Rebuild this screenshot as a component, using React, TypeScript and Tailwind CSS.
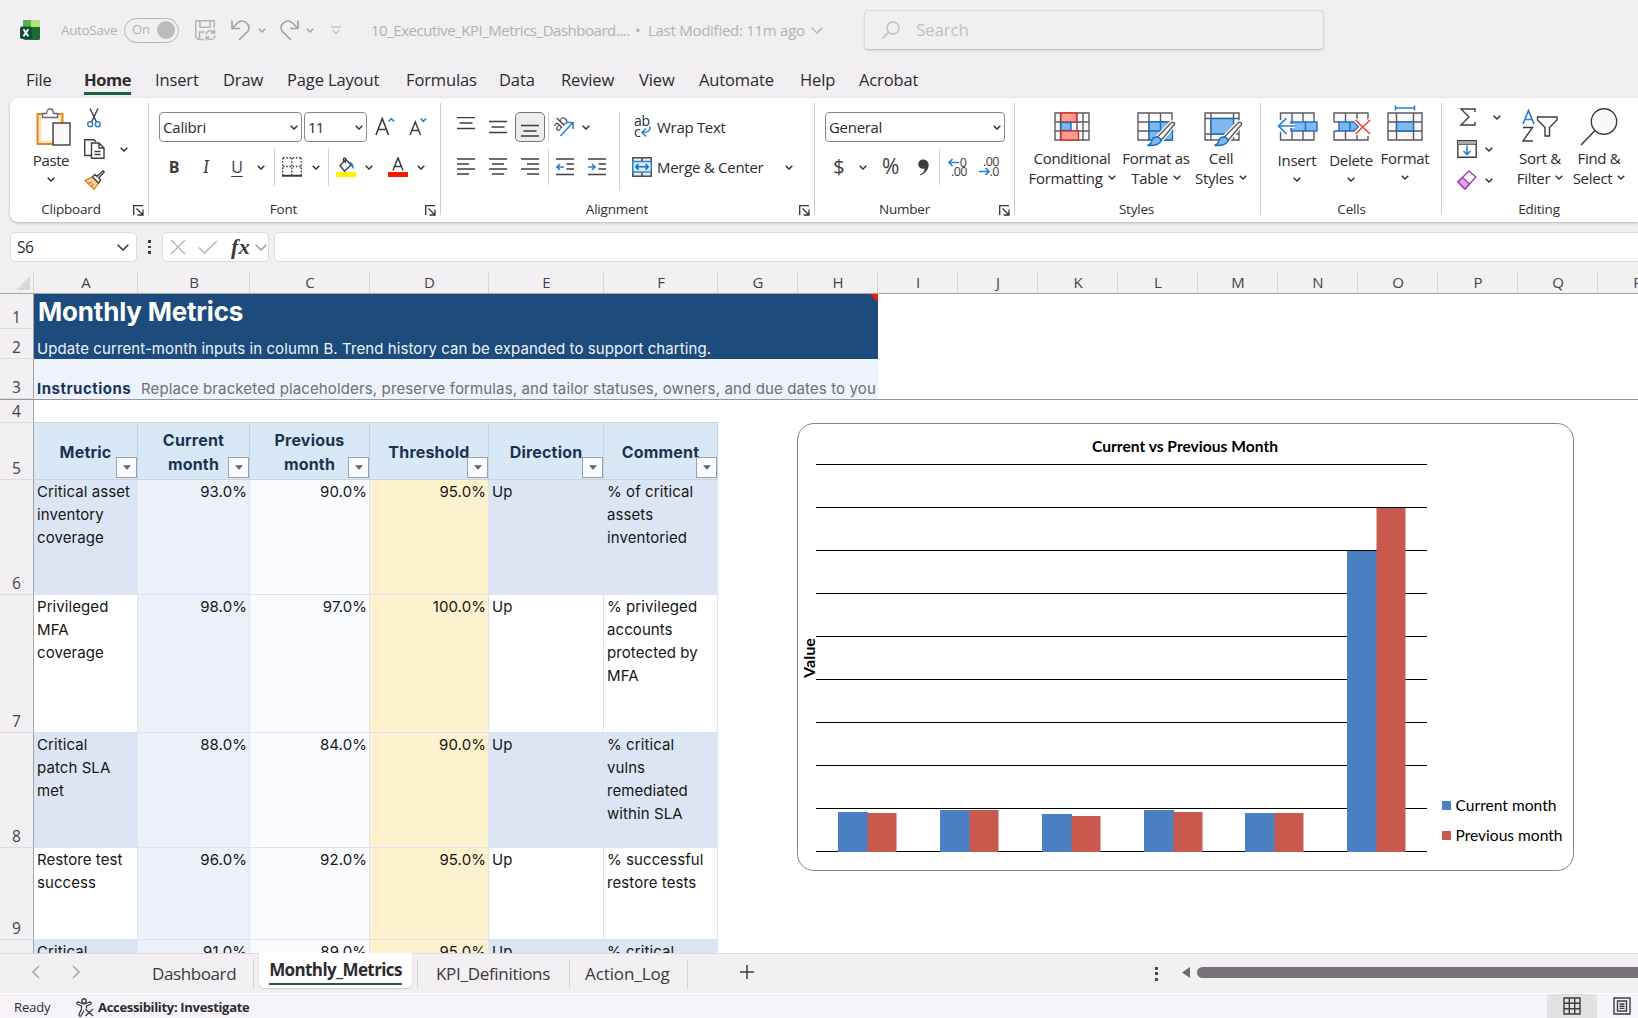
import type { ReactNode } from "react";
import clsx from "clsx";

const columns = [
  { name: "A", width: 104 },
  { name: "B", width: 112 },
  { name: "C", width: 120 },
  { name: "D", width: 119 },
  { name: "E", width: 115 },
  { name: "F", width: 114 },
  ...["G", "H", "I", "J", "K", "L", "M", "N", "O", "P", "Q", "R"].map((name) => ({ name, width: 80 })),
];

const headers = ["Metric", "Current month", "Previous month", "Threshold", "Direction", "Comment"];

const metrics = [
  { row: 6, height: 115, metric: "Critical asset\ninventory\ncoverage", current: "93.0%", previous: "90.0%", threshold: "95.0%", direction: "Up", comment: "% of critical\nassets\ninventoried" },
  { row: 7, height: 138, metric: "Privileged\nMFA\ncoverage", current: "98.0%", previous: "97.0%", threshold: "100.0%", direction: "Up", comment: "% privileged\naccounts\nprotected by\nMFA" },
  { row: 8, height: 115, metric: "Critical\npatch SLA\nmet", current: "88.0%", previous: "84.0%", threshold: "90.0%", direction: "Up", comment: "% critical\nvulns\nremediated\nwithin SLA" },
  { row: 9, height: 92, metric: "Restore test\nsuccess", current: "96.0%", previous: "92.0%", threshold: "95.0%", direction: "Up", comment: "% successful\nrestore tests" },
  { row: 10, height: 92, metric: "Critical", current: "91.0%", previous: "89.0%", threshold: "95.0%", direction: "Up", comment: "% critical" },
];

const menu = [
  { label: "File", width: 58 },
  { label: "Home", width: 71 },
  { label: "Insert", width: 68 },
  { label: "Draw", width: 64 },
  { label: "Page Layout", width: 119 },
  { label: "Formulas", width: 93 },
  { label: "Data", width: 62 },
  { label: "Review", width: 78 },
  { label: "View", width: 60 },
  { label: "Automate", width: 101 },
  { label: "Help", width: 59 },
  { label: "Acrobat", width: 80 },
];

type IconProps = { w: number; h: number; children: ReactNode; className?: string; stroke?: string };

function Icon({ w, h, children, className, stroke = "#3f3c40" }: IconProps) {
  return (
    <svg width={w} height={h} viewBox={`0 0 ${w} ${h}`} fill="none" stroke={stroke} strokeWidth="1.4" className={clsx("shrink-0", className)}>
      {children}
    </svg>
  );
}

function Chevron({ className, big, stroke = "#2b2b2b" }: { className?: string; big?: boolean; stroke?: string }) {
  return big ? (
    <Icon w={12} h={7} stroke={stroke} className={className}>
      <path d="M.7.8 6 6 11.300.8" />
    </Icon>
  ) : (
    <Icon w={8} h={5} stroke={stroke} className={className}>
      <path d="M.7.7 4 4 7.300.7" />
    </Icon>
  );
}

function Launcher() {
  return (
    <Icon w={11} h={11} stroke="#333">
      <path d="M10 .7H.7V10M3.500 3.500 9.500 9.500M10 4.500V10H4.500" strokeWidth="1.3" />
    </Icon>
  );
}

function Divider({ className }: { className?: string }) {
  return <div className={clsx("w-px shrink-0 bg-[#d3d1d4]", className)} />;
}

type GroupProps = { label: string; width: string; labelPad?: string; launcher?: boolean; children: ReactNode };

function Group({ label, width, labelPad, launcher, children }: GroupProps) {
  return (
    <section className={clsx("relative flex shrink-0 flex-col pt-[5px]", width)}>
      <div className="flex h-[96px]">{children}</div>
      <div className={clsx("text-center text-[13.5px] leading-5 tracking-[-0.2px] text-[#2f2f2f]", labelPad)}>{label}</div>
      {launcher && (
        <div className="absolute right-[5px] bottom-[6px]">
          <Launcher />
        </div>
      )}
      <div className="absolute top-[5px] right-0 h-[112px] w-px bg-[#cfcdd0]" />
    </section>
  );
}

function Lines({ rows, className }: { rows: [number, number, number][]; className?: string }) {
  return (
    <Icon w={18} h={20} className={className}>
      {rows.map(([x1, x2, y]) => (
        <path key={y} d={`M${x1} ${y}H${x2}`} strokeWidth="1.3" />
      ))}
    </Icon>
  );
}

function TitleBar() {
  return (
    <header className="flex h-[60px] items-center text-[#b3b1b4]">
      <Icon w={20} h={20} stroke="none" className="ml-5">
        <rect x="3" y="0" width="17" height="20" rx="2" fill="#1d7a35" />
        <path d="M5 0h7v7H3V2a2 2 0 0 1 2-2z" fill="#53b847" />
        <path d="M11 0h7a2 2 0 0 1 2 2v5h-9z" fill="#b6e27c" />
        <path d="M11 7h9v11a2 2 0 0 1-2 2h-7z" fill="#1e6b2d" />
        <rect x="0" y="6.500" width="12" height="12.500" rx="2" fill="#0f4f33" />
        <path d="M3.500 9.300 8.300 16.200M8.300 9.300 3.500 16.200" stroke="#fff" strokeWidth="1.900" />
      </Icon>
      <span className="ml-[21px] w-[63px] text-[13.5px] tracking-[-0.35px]">AutoSave</span>
      <div className="flex h-[25px] w-[55px] items-center justify-between rounded-full border border-[#b5b3b6] pr-[3px] pl-[7px]">
        <span className="text-[13px]">On</span>
        <span className="size-[18px] rounded-full bg-[#bcbabd]" />
      </div>
      <Icon w={21} h={21} stroke="#b3b1b4" className="ml-[16px]">
        <path d="M9 19.500H3.500L.8 17V.8h18.400V8M5 .8v6.400h10V.8M4.500 19v-7h5" />
        <path d="M11 14.500a4.500 4.500 0 0 1 8.300-1.500M19.500 9.500V13h-3.500M20 15.500a4.500 4.500 0 0 1-8.300 1.800M11.200 20.500V17h3.500" />
      </Icon>
      <Icon w={19} h={21} stroke="#a3a1a4" className="ml-[15px]">
        <path d="M1 .5V8.500H9M1 8.500 6.500 3C12-2 20.500 4.500 17 11L8 20" strokeWidth="1.600" />
      </Icon>
      <Chevron className="ml-[8px]" stroke="#a3a1a4" />
      <Icon w={19} h={21} stroke="#a3a1a4" className="ml-[14px]">
        <path d="M18 .5V8.500H10M18 8.500 12.500 3C7-2-1.500 4.500 2 11L11 20" strokeWidth="1.600" />
      </Icon>
      <Chevron className="ml-[7px]" stroke="#a3a1a4" />
      <Icon w={10} h={9} stroke="#c4c2c5" className="ml-[17px]">
        <path d="M0 1H10M1.500 4 5 7.500 8.500 4" />
      </Icon>
      <span className="ml-[30px] w-[262px] text-[15px] tracking-[-0.47px] whitespace-nowrap">10_Executive_KPI_Metrics_Dashboard....</span>
      <span className="mr-[3px] ml-[2px] w-[10px] text-[15px]">•</span>
      <span className="w-[162px] text-[15px] tracking-[-0.27px] whitespace-nowrap">Last Modified: 11m ago</span>
      <Chevron big stroke="#b3b1b4" className="ml-px" />
      <div className="ml-[41px] flex h-[40px] w-[460px] items-center rounded-[4px] border border-[#d9d7da] border-b-[#c5c3c6] pb-px pl-[17px] shadow-[0_1px_2px_rgba(0,0,0,0.1)]">
        <Icon w={18} h={18} stroke="#c0bec1">
          <circle cx="11" cy="7" r="6" />
          <path d="M6.700 11.300.5 17.500" />
        </Icon>
        <span className="ml-[16px] text-[17px] tracking-[-0.2px] text-[#c3c1c4]">Search</span>
      </div>
    </header>
  );
}

function Menu() {
  return (
    <nav className="flex h-[38px] pl-[26px] text-[16.5px] tracking-[-0.13px] text-[#2d2b2e]">
      {menu.map((item) => (
        <div key={item.label} style={{ width: item.width }} className="pt-[8px] leading-6 whitespace-nowrap">
          {item.label === "Home" ? (
            <span className="inline-block h-[27px] border-b-[3px] border-[#1a6045] font-bold tracking-[-0.4px]">{item.label}</span>
          ) : (
            item.label
          )}
        </div>
      ))}
    </nav>
  );
}

function ClipboardGroup() {
  return (
    <Group label="Clipboard" width="w-[139px]" labelPad="pr-[17px]" launcher>
      <div className="ml-[16px] flex w-[50px] flex-col items-center">
        <Icon w={35} h={38} className="mt-[5px] ml-[5px]">
          <rect x="1.500" y="6" width="25" height="30" fill="#fbe0b2" stroke="#e08a1e" strokeWidth="2" />
          <rect x="5" y="9" width="18" height="24" fill="#fff" stroke="none" />
          <path d="M6.500 9.500V5.500h4c0-6 7-6 7 0h4v4z" fill="#fff" stroke="#6b696c" />
          <rect x="17" y="15" width="17" height="22" fill="#faf8fb" />
        </Icon>
        <span className="mt-[2px] text-[15px] leading-6 tracking-[-0.4px] text-[#2d2b2e]">Paste</span>
        <Chevron className="mt-[5px]" />
      </div>
      <div className="ml-[8px] flex w-[20px] flex-col items-center">
        <Icon w={14} h={20} className="mt-[5px]">
          <path d="M3 .5 9.500 14M11 .5 4.500 14" />
          <circle cx="3.200" cy="16.300" r="2.500" stroke="#2782cf" />
          <circle cx="10.800" cy="16.300" r="2.500" stroke="#2782cf" />
        </Icon>
        <Icon w={21} h={20} className="mt-[11px]">
          <path d="M7 16.500H.7V.7H10l2 2" />
          <path d="M7.500 4H15l5 5v10.300H7.500zM15 4v5h5M10.500 12.500h6M10.500 15.500h6" fill="#fff" />
        </Icon>
        <Icon w={21} h={20} className="mt-[11px]">
          <path d="M1 10.500 8.500 7l6 6L10 19.300z" fill="#fbd9a4" stroke="#df8424" />
          <path d="M4 14 8 12M7 17l2.500-3" stroke="#df8424" />
          <path d="M8.500 7 11 4.500l2 2L19 .8l1.200 1.300-5.500 6 2 2-2.200 2.900z" fill="#fff" />
        </Icon>
      </div>
      <Chevron className="mt-[44px] ml-[16px]" />
    </Group>
  );
}

function FontGroup() {
  return (
    <Group label="Font" width="w-[292px]" labelPad="pr-[23px]" launcher>
      <div className="flex flex-col pl-[10px]">
        <div className="mt-[9px] flex h-[30px] items-center">
          <div className="flex h-[30px] w-[143px] items-center justify-between rounded-[4px] border border-[#8b898c] pt-px pr-[3px] pl-[3px] text-[15px] tracking-[-0.2px]">
            Calibri
            <Chevron />
          </div>
          <div className="ml-[2px] flex h-[30px] w-[63px] items-center justify-between rounded-[4px] border border-[#8b898c] pt-px pr-[3px] pl-[3px] text-[15px] tracking-[-0.8px]">
            11
            <Chevron />
          </div>
          <Icon w={20} h={19} className="-mt-[2px] ml-[8px]">
            <path d="M1 18 7.300 1.500 13.500 18M3.200 12.500h8.300" strokeWidth="1.600" />
            <path d="M13.500 4.500 16.300 1.700 19 4.500" stroke="#2782cf" strokeWidth="1.600" />
          </Icon>
          <Icon w={18} h={19} className="-mt-[2px] ml-[14px]">
            <path d="M1 18 6.300 5 11.500 18M2.900 13.500h7" strokeWidth="1.500" />
            <path d="M11.500 1.500 14.300 4.300 17 1.500" stroke="#2782cf" strokeWidth="1.600" />
          </Icon>
        </div>
        <div className="mt-[11px] flex h-[28px] items-center text-[#3f3c40]">
          <span className="w-[30px] text-center text-[16px] font-bold">B</span>
          <span className="w-[34px] text-center font-serif text-[18px] italic">I</span>
          <span className="w-[28px] text-center text-[16px] underline underline-offset-[3px]">U</span>
          <Chevron className="ml-[6px]" />
          <Divider className="ml-[9px] h-[38px]" />
          <Icon w={20} h={20} className="ml-[7px]">
            <path d="M1 .7H19M1 9.500H19M.7 1V18M9.800 1V18M19.200 1V18" strokeDasharray="1.600 1.600" />
            <path d="M0 18.800H20" strokeWidth="2" />
          </Icon>
          <Chevron className="ml-[10px]" />
          <Divider className="ml-[8px] h-[38px]" />
          <Icon w={20} h={20} className="ml-[7px]">
            <path d="M4 8.500 10 2.500l5 5.500-6.500 6.200z" fill="#fff" />
            <path d="M9.500 6V1.500Q8 0 7.500 2v3" />
            <path d="M13 4.500Q18 5.500 17.800 12.500L15 9z" fill="#1d74b5" stroke="none" />
            <rect x="0" y="15" width="20" height="5" fill="#fff200" stroke="none" />
          </Icon>
          <Chevron className="ml-[9px]" />
          <Icon w={20} h={20} className="ml-[15px]">
            <path d="M5 13.500 10 .8l5 12.700M6.800 9.500h6.400" strokeWidth="1.500" />
            <rect x="0" y="15" width="20" height="5" fill="#f81800" stroke="none" />
          </Icon>
          <Chevron className="ml-[9px]" />
        </div>
      </div>
    </Group>
  );
}

function AlignmentGroup() {
  return (
    <Group label="Alignment" width="w-[374px]" labelPad="pr-[22px]" launcher>
      <div className="flex flex-col pl-[16px]">
        <div className="mt-[9px] flex h-[30px] items-center">
          <Lines rows={[[0, 18, 0.7], [2.5, 15.5, 6], [0, 18, 11.5]]} />
          <Lines rows={[[0, 18, 4.5], [2.5, 15.5, 10], [0, 18, 15.5]]} className="ml-[14px]" />
          <div className="ml-[8px] flex h-[30px] w-[30px] items-center justify-center rounded-[5px] border border-[#77757a] bg-[#efecf0]">
            <Lines rows={[[0, 18, 8.5], [2.5, 15.5, 14], [0, 18, 19]]} />
          </div>
          <Divider className="ml-[3px] h-[30px]" />
          <div className="relative ml-[4px] h-[22px] w-[22px]">
            <span className="absolute top-[-1px] -left-px -rotate-45 text-[14px] leading-4 tracking-[-0.5px] text-[#3f3c40]">ab</span>
            <Icon w={22} h={22} stroke="#2782cf" className="absolute top-0 left-0">
              <path d="M7.500 20 19.500 7M13.500 6.500H20V13" strokeWidth="1.600" />
            </Icon>
          </div>
          <Chevron className="ml-[7px]" />
        </div>
        <div className="mt-[11px] flex h-[28px] items-center">
          <Lines rows={[[0, 18, 2], [0, 12, 7], [0, 18, 12], [0, 12, 17]]} />
          <Lines rows={[[0, 18, 2], [3, 15, 7], [0, 18, 12], [3, 15, 17]]} className="ml-[14px]" />
          <Lines rows={[[0, 18, 2], [6, 18, 7], [0, 18, 12], [6, 18, 17]]} className="ml-[14px]" />
          <Divider className="ml-[9px] h-[36px]" />
          <Icon w={18} h={20} className="ml-[7px]">
            <path d="M0 2H18M10.500 7H18M10.500 12H18M0 17.500H18" />
            <path d="M8 10H1M4 7 1 10l3 3" stroke="#2782cf" strokeWidth="1.700" />
          </Icon>
          <Icon w={18} h={20} className="ml-[14px]">
            <path d="M0 2H18M10.500 7H18M10.500 12H18M0 17.500H18" />
            <path d="M0 10H7M4 7l3 3-3 3" stroke="#2782cf" strokeWidth="1.700" />
          </Icon>
        </div>
      </div>
      <Divider className="mt-[9px] ml-[13px] h-[78px]" />
      <div className="flex flex-col pl-[12px]">
        <div className="mt-[9px] flex h-[30px] items-center text-[15px] tracking-[-0.3px] text-[#2d2b2e]">
          <div className="relative h-[22px] w-[20px]">
            <span className="absolute top-0 left-[2px] text-[14px] leading-[9px] tracking-[-0.2px]">ab</span>
            <span className="absolute top-[11px] left-[2px] text-[14px] leading-[9px]">c</span>
            <Icon w={20} h={22} stroke="#2782cf" className="absolute top-0 left-0">
              <path d="M18 10.500q1 6-7.500 6M14 12.500l-4 4 4 4" strokeWidth="1.600" />
            </Icon>
          </div>
          <span className="ml-[5px] pt-px">Wrap Text</span>
        </div>
        <div className="mt-[11px] flex h-[28px] items-center text-[15px] tracking-[-0.28px] text-[#2d2b2e]">
          <Icon w={20} h={20}>
            <rect x=".8" y=".8" width="18.400" height="18.400" fill="#eee" />
            <path d="M10 1V19" />
            <rect x=".8" y="4.500" width="18.400" height="10.500" fill="#d7ebfb" stroke="#2782cf" />
            <path d="M4 9.800H16M6.500 7 3.800 9.800l2.700 2.800M13.500 7l2.700 2.800-2.700 2.800" stroke="#1a6fc0" strokeWidth="1.600" />
          </Icon>
          <span className="ml-[5px] w-[128px] pt-px">Merge &amp; Center</span>
          <Chevron />
        </div>
      </div>
    </Group>
  );
}

function NumberGroup() {
  return (
    <Group label="Number" width="w-[200px]" labelPad="pr-[21px]" launcher>
      <div className="flex flex-col pl-[10px]">
        <div className="mt-[9px] flex h-[30px] w-[180px] items-center justify-between rounded-[4px] border border-[#8b898c] pt-px pr-[3px] pl-[3px] text-[15px] tracking-[-0.3px]">
          General
          <Chevron />
        </div>
        <div className="mt-[11px] flex h-[28px] items-center text-[#3f3c40]">
          <span className="ml-[7px] w-[14px] text-center text-[20px]">$</span>
          <Chevron className="ml-[13px]" />
          <span className="ml-[15px] w-[20px] text-[21px] tracking-[-1px]">%</span>
          <Icon w={11} h={17} stroke="none" className="ml-[16px]">
            <path d="M5 .5C13 .5 13 12 2.500 16.500L2 15.500C5 14 6.500 12 6.500 9.500 3 10.500.3 8.500.3 5.200.3 2.500 2.500.5 5 .5z" fill="#3f3c40" />
          </Icon>
          <Divider className="ml-[10px] h-[36px]" />
          <div className="ml-[7px] h-[20px] w-[20px]">
            <div className="flex h-[10px] items-center justify-end text-[12.500px] leading-[9px]">
              <Icon w={11} h={9} stroke="#2782cf" className="mr-px">
                <path d="M11 4.500H1M4.500 1 1 4.500 4.500 8" strokeWidth="1.700" />
              </Icon>
              0
            </div>
            <div className="text-right text-[12.500px] leading-[9px] tracking-[-0.5px]">.00</div>
          </div>
          <div className="ml-[12px] h-[20px] w-[20px]">
            <div className="h-[10px] text-right text-[12.500px] leading-[9px] tracking-[-0.5px]">.00</div>
            <div className="flex h-[9px] items-center justify-end text-[12.500px] leading-[9px] tracking-[-0.5px]">
              <Icon w={11} h={9} stroke="#2782cf">
                <path d="M0 4.500H10M6.500 1 10 4.500 6.500 8" strokeWidth="1.700" />
              </Icon>
              .0
            </div>
          </div>
        </div>
      </div>
    </Group>
  );
}

// Tall ribbon button: drawing on top, caption in one or two lines
function BigButton({ icon, lines, width, className }: { icon: ReactNode; lines: [string, string?]; width: string; className?: string }) {
  const two = lines[1] !== undefined;
  return (
    <div className={clsx("flex shrink-0 flex-col items-center text-[15px] leading-5 tracking-[-0.28px] whitespace-nowrap text-[#2d2b2e]", width, className)}>
      <div className="flex h-[45px] items-start">{icon}</div>
      <span>{lines[0]}</span>
      {two ? (
        <span className="flex items-center gap-[5px]">
          {lines[1]}
          <Chevron className="-mt-[2px]" />
        </span>
      ) : (
        <Chevron className="mt-[7px]" />
      )}
    </div>
  );
}

function Brush() {
  return (
    <>
      <path d="M36.500 10.500Q38.500 11 37 13L24 28.500 20 25.500 33.500 11.500Q35 10 36.500 10.500z" fill="#fff" stroke="#fff" strokeWidth="4" />
      <path d="M36.500 10.500Q38.500 11 37 13L24 28.500 20 25.500 33.500 11.500Q35 10 36.500 10.500z" fill="#fff" />
      <path d="M19.500 25Q24 25.500 24 29 22 34 10.500 33.500 15 31.500 15 28 16.500 25 19.500 25z" fill="#7fb8ec" stroke="#1c6dba" />
    </>
  );
}

function StylesGroup() {
  return (
    <Group label="Styles" width="w-[246px]" labelPad="pr-[3px]">
      <BigButton
        width="w-[90px]"
        className="ml-[12px]"
        lines={["Conditional", "Formatting"]}
        icon={
          <Icon w={36} h={29} stroke="#5b595c" className="mt-[9px]">
            <path d="M1 1H35V28H1zM6.500 1V28M23 1V28M29 1V28M1 10H35M1 19H35" />
            <rect x="7" y="1" width="15.500" height="9" fill="#ff9c96" stroke="#e0301e" />
            <rect x="7" y="10.500" width="10" height="8" fill="#7fb8ec" stroke="#1c6dba" />
            <rect x="7" y="19" width="17.500" height="9" fill="#ff9c96" stroke="#e0301e" />
          </Icon>
        }
      />
      <BigButton
        width="w-[72px]"
        className="ml-[3px]"
        lines={["Format as", "Table"]}
        icon={
          <Icon w={39} h={35} stroke="#5b595c" className="mt-[9px] ml-px">
            <path d="M1 1H35V28H1zM12 1V28M23.500 1V28M1 10H35M1 19H35" />
            <rect x="12" y="10" width="23.500" height="18" fill="#7fb8ec" stroke="#1c6dba" />
            <path d="M12 19H35M23.500 10V28" stroke="#1c6dba" />
            <Brush />
          </Icon>
        }
      />
      <BigButton
        width="w-[60px]"
        lines={["Cell", "Styles"]}
        className="-ml-px"
        icon={
          <Icon w={39} h={35} stroke="#5b595c" className="mt-[9px] ml-[5px]">
            <path d="M1 1H35V28H1zM7 1V28M29.500 1V28M1 6.500H35M1 22H35" />
            <rect x="7" y="6.500" width="22.500" height="15.500" fill="#7fb8ec" stroke="#1c6dba" />
            <Brush />
          </Icon>
        }
      />
    </Group>
  );
}

function CellsGroup() {
  return (
    <Group label="Cells" width="w-[181px]">
      <BigButton
        width="w-[54px]"
        className="ml-[9px] pt-[2px]"
        lines={["Insert"]}
        icon={
          <Icon w={41} h={29} stroke="#5b595c" className="mt-[7px]">
            <path d="M3.500 8V1H37V28H3.500V20M15 1V28M26 1V28" fill="#faf8fb" />
            <rect x="14" y="10" width="26" height="9" fill="#7fb8ec" stroke="#1c6dba" />
            <path d="M28.500 10V19" stroke="#1c6dba" />
            <path d="M9.500 6 1.500 14l8 8M1.500 14H18" stroke="#fff" strokeWidth="4" />
            <path d="M9.500 6 1.500 14l8 8M1.500 14H18" stroke="#2782cf" strokeWidth="1.700" />
          </Icon>
        }
      />
      <BigButton
        width="w-[54px]"
        className="pt-[2px]"
        lines={["Delete"]}
        icon={
          <Icon w={38} h={29} stroke="#5b595c" className="mt-[7px] ml-[2px]">
            <path d="M1 10V1H35V8M1 10H6M1 19H6M1 19V28H35V24M12.500 1V10M24 1V10M12.500 19V28M24 19V28" fill="#faf8fb" />
            <path d="M6 10H21l4.500 4.500L21 19H6zM17 10V19" fill="#7fb8ec" stroke="#1c6dba" />
            <path d="M22.500 8 37 22M37 8 22.500 22" stroke="#fff" strokeWidth="4" />
            <path d="M22.500 8 37 22M37 8 22.500 22" stroke="#ee4b35" strokeWidth="1.700" />
          </Icon>
        }
      />
      <BigButton
        width="w-[54px]"
        lines={["Format"]}
        icon={
          <Icon w={36} h={36} stroke="#5b595c" className="mt-[2px]">
            <path d="M1 8H35V35H1zM9.500 8V35M26.500 8V35M1 17H35M1 26H35" fill="#faf8fb" />
            <rect x="9.500" y="17" width="17" height="9" fill="#7fb8ec" stroke="#1c6dba" />
            <path d="M8.500 3H27.500M8.500 .5V5.500M27.500 .5V5.500" stroke="#2782cf" strokeWidth="1.600" />
          </Icon>
        }
      />
    </Group>
  );
}

function EditingGroup() {
  return (
    <Group label="Editing" width="w-[220px]" labelPad="pr-[26px]">
      <div className="ml-[15px] flex w-[44px] flex-col">
        <div className="mt-[5px] flex items-center">
          <Icon w={18} h={18} className="ml-[2px]">
            <path d="M16 4V1H2l8 8-8 8H16V14" />
          </Icon>
          <Chevron className="ml-[16px]" />
        </div>
        <div className="mt-[14px] flex items-center">
          <Icon w={20} h={18}>
            <path d="M.8.8H19.200V17.200H.8zM.8 4H19.200" fill="#fff" />
            <rect x="1" y="1" width="18" height="3" fill="#a8a6a9" stroke="none" />
            <path d="M10 5.500V14M6.500 11 10 14.500 13.500 11" stroke="#2782cf" strokeWidth="1.600" />
          </Icon>
          <Chevron className="ml-[8px]" />
        </div>
        <div className="mt-[12px] flex items-center">
          <Icon w={20} h={20} stroke="#9a3fa8">
            <path d="M12 1 18.800 7 8 19 1 12z" fill="#fff" />
            <path d="M5.500 7.500 12.500 14 8 19 1 12z" fill="#dba6e3" />
          </Icon>
          <Chevron className="ml-[8px]" />
        </div>
      </div>
      <BigButton
        width="w-[52px]"
        className="ml-[13px]"
        lines={["Sort &", "Filter"]}
        icon={
          <Icon w={36} h={34} className="mt-[6px]">
            <path d="M1 15 6.500 1.500 12 15M3 10.500h7" stroke="#2782cf" strokeWidth="1.700" />
            <path d="M1 18.500H10.500L1 32H11" />
            <path d="M15.500 8H35V11L27.500 18.500V27H23V18.500L15.500 11z" fill="#faf8fb" />
          </Icon>
        }
      />
      <BigButton
        width="w-[56px]"
        className="ml-[5px]"
        lines={["Find &", "Select"]}
        icon={
          <Icon w={38} h={38} className="mt-[5px]">
            <circle cx="24" cy="13.500" r="12.700" fill="#faf8fb" />
            <path d="M15 22.500 1 37" strokeWidth="1.600" />
          </Icon>
        }
      />
    </Group>
  );
}

function FormulaBar() {
  return (
    <div className="mt-[10px] flex h-[30px] items-center pl-[10px]">
      <div className="flex h-[30px] w-[127px] items-center justify-between rounded-[5px] border border-[#dddade] bg-white pt-px pr-[7px] pl-[6px] text-[15.5px] tracking-[-0.5px]">
        S6
        <Chevron big />
      </div>
      <div className="ml-[11px] flex w-[3px] flex-col gap-[3px]">
        <span className="size-[2.500px] bg-[#3b393c]" />
        <span className="size-[2.500px] bg-[#3b393c]" />
        <span className="size-[2.500px] bg-[#3b393c]" />
      </div>
      <div className="ml-[11px] flex h-[30px] w-[107px] items-center rounded-[5px] border border-[#dddade] bg-white pl-[7px]">
        <Icon w={16} h={16} stroke="#b5b1b8">
          <path d="M1 1 15 15M15 1 1 15" />
        </Icon>
        <Icon w={20} h={14} stroke="#b5b1b8" className="ml-[12px]">
          <path d="M.7 7.500 6.500 13 19 1" />
        </Icon>
        <span className="ml-[13px] w-[20px] font-['Liberation_Serif',serif] text-[22px] leading-5 font-bold tracking-[0.5px] text-[#3b393c] italic">fx</span>
        <Chevron big className="ml-[4px]" stroke="#9a979c" />
      </div>
      <div className="ml-[5px] h-[30px] flex-1 rounded-l-[5px] border border-r-0 border-[#dddade] bg-white" />
    </div>
  );
}

function RowHeader({ n }: { n: number }) {
  return (
    <div className="flex w-[34px] shrink-0 items-end justify-center border-r border-b border-r-[#a5a3a6] border-b-[#dddbde] bg-[#f2f0f3] text-[15.5px] leading-[22px] text-[#454346]">
      {n}
    </div>
  );
}

function FilterButton() {
  return (
    <div className="absolute right-0 bottom-[1px] flex size-[21px] items-center justify-center border border-[#9aa0ac] bg-[#fafbff]">
      <svg width="8" height="5" viewBox="0 0 8 5" fill="#636166">
        <path d="M0 .3H8L4 4.700z" />
      </svg>
    </div>
  );
}

function Sheet() {
  return (
    <main className="relative h-[682px] overflow-hidden bg-white">
      <div className="flex h-[23px] border-b border-[#a5a3a6] bg-[#f2f0f3] text-[15px] text-[#454346]">
        <div className="flex w-[34px] shrink-0 items-end justify-end border-r border-[#d5d3d6] pr-[3px] pb-[3px]">
          <svg width="14" height="14" viewBox="0 0 14 14" fill="#dad8db">
            <path d="M14 0V14H0z" />
          </svg>
        </div>
        {columns.map((col) => (
          <div key={col.name} style={{ width: col.width }} className="shrink-0 border-r border-[#d9d7da] pl-px text-center leading-[22px]">
            {col.name}
          </div>
        ))}
      </div>

      <div className="flex h-[35px]">
        <RowHeader n={1} />
        <div className="relative w-[844px] bg-[#1c4b7c] pl-[4px] font-[Inter] text-[26px] leading-[35px] font-bold tracking-[-0.2px] text-white">
          Monthly Metrics
          <svg width="8" height="8" viewBox="0 0 8 8" fill="#f81800" className="absolute top-0 right-0">
            <path d="M0 0H8V8z" />
          </svg>
        </div>
      </div>
      <div className="flex h-[30px]">
        <RowHeader n={2} />
        <div className="flex w-[844px] items-end bg-[#1c4b7c] pl-[3px] font-[Inter] text-[15px] leading-[21px] tracking-[0.09px] text-[#eef3fa]">
          Update current-month inputs in column B. Trend history can be expanded to support charting.
        </div>
      </div>
      <div className="flex h-[40px]">
        <RowHeader n={3} />
        <div className="flex w-[844px] items-end overflow-hidden bg-[#eef2fb] pl-[3px] font-[Inter] text-[15px] leading-[21px] whitespace-nowrap">
          <span className="w-[104px] font-bold tracking-[0.5px] text-[#17365d]">Instructions</span>
          <span className="tracking-[0.13px] text-[#68707e]">
            Replace bracketed placeholders, preserve formulas, and tailor statuses, owners, and due dates to you
          </span>
        </div>
      </div>
      {/* freeze pane line */}
      <div className="h-px bg-[#98969a]" />
      <div className="flex h-[23px]">
        <RowHeader n={4} />
        <div className="w-[684px] border-b border-[#c9d3e0]" />
      </div>
      <div className="flex h-[57px]">
        <RowHeader n={5} />
        {headers.map((label, i) => (
          <div
            key={label}
            style={{ width: columns[i].width }}
            className="relative flex items-center justify-center border-r border-b border-[#c5d3e4] bg-[#d8e8f7] px-[14px] pt-px text-center font-[Inter] text-[16px] leading-6 font-bold tracking-[0.2px] text-[#1c3350]"
          >
            {label}
            <FilterButton />
          </div>
        ))}
      </div>
      {metrics.map((m, i) => {
        const band = i % 2 === 0 ? "bg-[#dce5f3]" : "bg-white";
        const cell =
          "shrink-0 border-r border-b border-[#dde3f0] font-[Inter] text-[15px] leading-[23px] tracking-[0.08px] whitespace-pre-line text-[#161616]";
        return (
          <div key={m.row} style={{ height: m.height }} className="flex">
            <RowHeader n={m.row} />
            <div className={clsx(cell, band, "w-[104px] pl-[3px]")}>{m.metric}</div>
            <div className={clsx(cell, "w-[112px] bg-[#ebf0f9] pr-[2px] text-right")}>{m.current}</div>
            <div className={clsx(cell, "w-[120px] bg-[#f9fbff] pr-[2px] text-right")}>{m.previous}</div>
            <div className={clsx(cell, "w-[119px] bg-[#fef1ce] pr-[2px] text-right")}>{m.threshold}</div>
            <div className={clsx(cell, band, "w-[115px] pl-[3px]")}>{m.direction}</div>
            <div className={clsx(cell, band, "w-[114px] pl-[3px]")}>{m.comment}</div>
          </div>
        );
      })}

      <Chart />
    </main>
  );
}

const bars = [
  { x: 40, current: 40, previous: 39 },
  { x: 142, current: 42, previous: 42 },
  { x: 244, current: 38, previous: 36 },
  { x: 346, current: 42, previous: 40 },
  { x: 447, current: 39, previous: 39 },
  { x: 549, current: 301, previous: 344 },
];

function Chart() {
  return (
    <div className="absolute top-[152px] left-[797px] h-[448px] w-[777px] rounded-[17px] border border-[#858386] bg-white">
      <svg width="775" height="446" viewBox="0 0 775 446" className="font-[Lato] text-black">
        <text x="294" y="28" fontSize="15" fontWeight="700" textLength="186" lengthAdjust="spacingAndGlyphs">
          Current vs Previous Month
        </text>
        {Array.from({ length: 10 }, (_, i) => (
          <rect key={i} x="18" y={40 + i * 43} width="611" height="1" fill="#000" />
        ))}
        {bars.map((bar) => (
          <g key={bar.x}>
            <rect x={bar.x} y={428 - bar.current} width="30" height={bar.current} fill="#4a7fc1" />
            <rect x={bar.x + 29.5} y={428 - bar.previous} width="29" height={bar.previous} fill="#c9594d" />
          </g>
        ))}
        <text x="-254" y="17" transform="rotate(-90)" fontSize="14.5" fontWeight="700" textLength="40" lengthAdjust="spacingAndGlyphs">
          Value
        </text>
        <rect x="644" y="377" width="9" height="9" fill="#4a7fc1" />
        <text x="657.5" y="387" fontSize="15.500" textLength="101" lengthAdjust="spacingAndGlyphs">
          Current month
        </text>
        <rect x="644" y="407" width="9" height="9" fill="#c9594d" />
        <text x="657.5" y="417" fontSize="15.500" textLength="107" lengthAdjust="spacingAndGlyphs">
          Previous month
        </text>
      </svg>
    </div>
  );
}

function SheetTabs() {
  return (
    <div className="flex h-[40px] items-center border-t border-[#dcdadd] bg-[#f2f0f3] text-[17px] tracking-[-0.4px] whitespace-nowrap text-[#3b393c]">
      <Icon w={8} h={14} stroke="#a9a7aa" className="-mt-[3px] ml-[32px]">
        <path d="M7 1 1 7l6 6" strokeWidth="1.600" />
      </Icon>
      <Icon w={8} h={14} stroke="#a9a7aa" className="-mt-[3px] ml-[32px]">
        <path d="M1 1 7 7 1 13" strokeWidth="1.600" />
      </Icon>
      <span className="ml-[72px] w-[101px]">Dashboard</span>
      <Divider className="h-[28px]" />
      <div className="-mt-px ml-[5px] flex h-[35px] w-[153px] justify-center self-start rounded-b-[5px] bg-white shadow-[0_1px_2px_rgba(0,0,0,0.15)]">
        <span className="mt-[5px] h-[27px] border-b-2 border-[#1d5f42] leading-[24px] font-bold tracking-[-0.6px] text-[#2d2b2e]">Monthly_Metrics</span>
      </div>
      <Divider className="ml-[5px] h-[28px]" />
      <span className="ml-[18px] w-[133px] tracking-[-0.3px]">KPI_Definitions</span>
      <Divider className="h-[28px]" />
      <span className="ml-[15px] w-[102px] tracking-[-0.1px]">Action_Log</span>
      <Divider className="h-[28px]" />
      <Icon w={14} h={14} className="-mt-[3px] ml-[52px]">
        <path d="M7 0V14M0 7H14" strokeWidth="1.500" />
      </Icon>
      <div className="ml-[401px] flex flex-col gap-[2.500px]">
        <span className="size-[3px] bg-[#4a484b]" />
        <span className="size-[3px] bg-[#4a484b]" />
        <span className="size-[3px] bg-[#4a484b]" />
      </div>
      <svg width="8" height="11" viewBox="0 0 8 11" fill="#6f6b70" className="-mt-[2px] ml-[24px]">
        <path d="M8 0V11L0 5.500z" />
      </svg>
      <div className="-mt-[2px] ml-[7px] h-[11px] flex-1 rounded-l-full bg-[#777277]" />
    </div>
  );
}

function StatusBar() {
  return (
    <footer className="flex h-[25px] items-center border-t border-white bg-[#f6f4f8] text-[13px] text-[#2d2b2e]">
      <span className="ml-[14px] w-[62px] pt-[3px] tracking-[-0.1px]">Ready</span>
      <Icon w={18} h={19} className="mt-[2px]">
        <circle cx="8" cy="3" r="2.200" />
        <path d="M1 4.500q-.5 1.500 1 2L5.500 8v3L3 16.500q0 2 2 1.500L8 12.500M15 4.500q.5 1.500-1 2L10.500 8v2.500M1 4.500q1-1 2.500 0L8 6l4.500-1.500q1.500-1 2.500 0M9.500 11 17 18M17 11 9.500 18" strokeWidth="1.300" />
      </Icon>
      <span className="ml-[4px] pt-[3px] font-bold tracking-[-0.32px]">Accessibility: Investigate</span>
      <div className="mr-[16px] ml-auto flex h-full w-[50px] items-center justify-center bg-[#e4e1e5]">
        <Icon w={18} h={18} className="mr-px">
          <path d="M1 1H17V17H1zM6.300 1V17M11.700 1V17M1 6.300H17M1 11.700H17" />
        </Icon>
      </div>
      <Icon w={18} h={18} className="mr-[7px]">
        <path d="M1 1H17V17H1zM4.500 4H13.500V14H4.500zM6.500 7H11.500M6.500 9.200H11.500M6.500 11.400H11.500" />
      </Icon>
    </footer>
  );
}

export default function App() {
  return (
    <div className="h-[1018px] w-[1638px] overflow-hidden bg-[#f1eff2] font-['Open_Sans',sans-serif] text-[#2d2b2e]">
      <TitleBar />
      <Menu />
      <div className="ml-[10px] flex h-[124px] overflow-hidden rounded-l-[8px] bg-white shadow-[0_1px_3px_rgba(0,0,0,0.25)]">
        <ClipboardGroup />
        <FontGroup />
        <AlignmentGroup />
        <NumberGroup />
        <StylesGroup />
        <CellsGroup />
        <EditingGroup />
      </div>
      <FormulaBar />
      <div className="h-[9px]" />
      <Sheet />
      <SheetTabs />
      <StatusBar />
    </div>
  );
}
